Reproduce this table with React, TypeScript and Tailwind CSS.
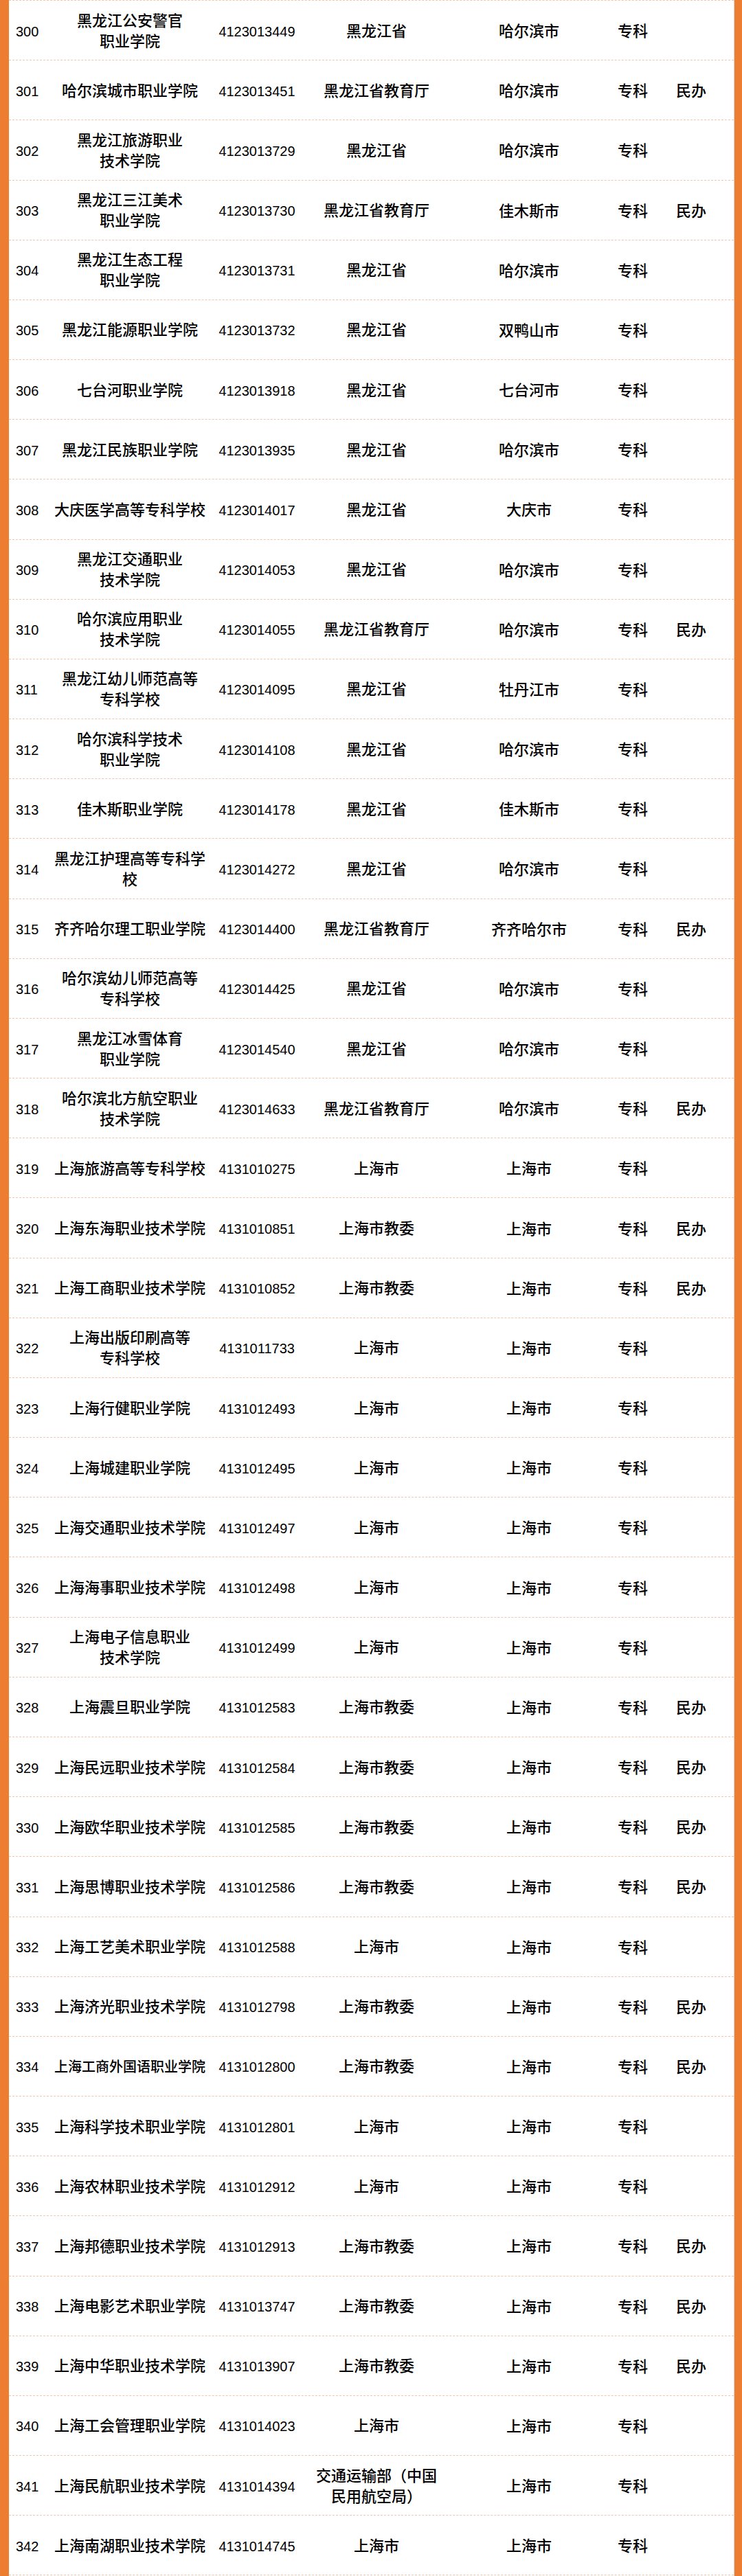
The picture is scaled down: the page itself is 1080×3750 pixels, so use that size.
import React from 'react';

type Row = {
  no: number;
  name: string[];
  code: string;
  dept: string[];
  city: string;
  level: string;
  kind?: string;
  small?: boolean;
};

const rows: Row[] = [
  { no: 300, name: ['黑龙江公安警官', '职业学院'], code: '4123013449', dept: ['黑龙江省'], city: '哈尔滨市', level: '专科' },
  { no: 301, name: ['哈尔滨城市职业学院'], code: '4123013451', dept: ['黑龙江省教育厅'], city: '哈尔滨市', level: '专科', kind: '民办' },
  { no: 302, name: ['黑龙江旅游职业', '技术学院'], code: '4123013729', dept: ['黑龙江省'], city: '哈尔滨市', level: '专科' },
  { no: 303, name: ['黑龙江三江美术', '职业学院'], code: '4123013730', dept: ['黑龙江省教育厅'], city: '佳木斯市', level: '专科', kind: '民办' },
  { no: 304, name: ['黑龙江生态工程', '职业学院'], code: '4123013731', dept: ['黑龙江省'], city: '哈尔滨市', level: '专科' },
  { no: 305, name: ['黑龙江能源职业学院'], code: '4123013732', dept: ['黑龙江省'], city: '双鸭山市', level: '专科' },
  { no: 306, name: ['七台河职业学院'], code: '4123013918', dept: ['黑龙江省'], city: '七台河市', level: '专科' },
  { no: 307, name: ['黑龙江民族职业学院'], code: '4123013935', dept: ['黑龙江省'], city: '哈尔滨市', level: '专科' },
  { no: 308, name: ['大庆医学高等专科学校'], code: '4123014017', dept: ['黑龙江省'], city: '大庆市', level: '专科' },
  { no: 309, name: ['黑龙江交通职业', '技术学院'], code: '4123014053', dept: ['黑龙江省'], city: '哈尔滨市', level: '专科' },
  { no: 310, name: ['哈尔滨应用职业', '技术学院'], code: '4123014055', dept: ['黑龙江省教育厅'], city: '哈尔滨市', level: '专科', kind: '民办' },
  { no: 311, name: ['黑龙江幼儿师范高等', '专科学校'], code: '4123014095', dept: ['黑龙江省'], city: '牡丹江市', level: '专科' },
  { no: 312, name: ['哈尔滨科学技术', '职业学院'], code: '4123014108', dept: ['黑龙江省'], city: '哈尔滨市', level: '专科' },
  { no: 313, name: ['佳木斯职业学院'], code: '4123014178', dept: ['黑龙江省'], city: '佳木斯市', level: '专科' },
  { no: 314, name: ['黑龙江护理高等专科学', '校'], code: '4123014272', dept: ['黑龙江省'], city: '哈尔滨市', level: '专科' },
  { no: 315, name: ['齐齐哈尔理工职业学院'], code: '4123014400', dept: ['黑龙江省教育厅'], city: '齐齐哈尔市', level: '专科', kind: '民办' },
  { no: 316, name: ['哈尔滨幼儿师范高等', '专科学校'], code: '4123014425', dept: ['黑龙江省'], city: '哈尔滨市', level: '专科' },
  { no: 317, name: ['黑龙江冰雪体育', '职业学院'], code: '4123014540', dept: ['黑龙江省'], city: '哈尔滨市', level: '专科' },
  { no: 318, name: ['哈尔滨北方航空职业', '技术学院'], code: '4123014633', dept: ['黑龙江省教育厅'], city: '哈尔滨市', level: '专科', kind: '民办' },
  { no: 319, name: ['上海旅游高等专科学校'], code: '4131010275', dept: ['上海市'], city: '上海市', level: '专科' },
  { no: 320, name: ['上海东海职业技术学院'], code: '4131010851', dept: ['上海市教委'], city: '上海市', level: '专科', kind: '民办' },
  { no: 321, name: ['上海工商职业技术学院'], code: '4131010852', dept: ['上海市教委'], city: '上海市', level: '专科', kind: '民办' },
  { no: 322, name: ['上海出版印刷高等', '专科学校'], code: '4131011733', dept: ['上海市'], city: '上海市', level: '专科' },
  { no: 323, name: ['上海行健职业学院'], code: '4131012493', dept: ['上海市'], city: '上海市', level: '专科' },
  { no: 324, name: ['上海城建职业学院'], code: '4131012495', dept: ['上海市'], city: '上海市', level: '专科' },
  { no: 325, name: ['上海交通职业技术学院'], code: '4131012497', dept: ['上海市'], city: '上海市', level: '专科' },
  { no: 326, name: ['上海海事职业技术学院'], code: '4131012498', dept: ['上海市'], city: '上海市', level: '专科' },
  { no: 327, name: ['上海电子信息职业', '技术学院'], code: '4131012499', dept: ['上海市'], city: '上海市', level: '专科' },
  { no: 328, name: ['上海震旦职业学院'], code: '4131012583', dept: ['上海市教委'], city: '上海市', level: '专科', kind: '民办' },
  { no: 329, name: ['上海民远职业技术学院'], code: '4131012584', dept: ['上海市教委'], city: '上海市', level: '专科', kind: '民办' },
  { no: 330, name: ['上海欧华职业技术学院'], code: '4131012585', dept: ['上海市教委'], city: '上海市', level: '专科', kind: '民办' },
  { no: 331, name: ['上海思博职业技术学院'], code: '4131012586', dept: ['上海市教委'], city: '上海市', level: '专科', kind: '民办' },
  { no: 332, name: ['上海工艺美术职业学院'], code: '4131012588', dept: ['上海市'], city: '上海市', level: '专科' },
  { no: 333, name: ['上海济光职业技术学院'], code: '4131012798', dept: ['上海市教委'], city: '上海市', level: '专科', kind: '民办' },
  { no: 334, name: ['上海工商外国语职业学院'], code: '4131012800', dept: ['上海市教委'], city: '上海市', level: '专科', kind: '民办', small: true },
  { no: 335, name: ['上海科学技术职业学院'], code: '4131012801', dept: ['上海市'], city: '上海市', level: '专科' },
  { no: 336, name: ['上海农林职业技术学院'], code: '4131012912', dept: ['上海市'], city: '上海市', level: '专科' },
  { no: 337, name: ['上海邦德职业技术学院'], code: '4131012913', dept: ['上海市教委'], city: '上海市', level: '专科', kind: '民办' },
  { no: 338, name: ['上海电影艺术职业学院'], code: '4131013747', dept: ['上海市教委'], city: '上海市', level: '专科', kind: '民办' },
  { no: 339, name: ['上海中华职业技术学院'], code: '4131013907', dept: ['上海市教委'], city: '上海市', level: '专科', kind: '民办' },
  { no: 340, name: ['上海工会管理职业学院'], code: '4131014023', dept: ['上海市'], city: '上海市', level: '专科' },
  { no: 341, name: ['上海民航职业技术学院'], code: '4131014394', dept: ['交通运输部（中国', '民用航空局）'], city: '上海市', level: '专科' },
  { no: 342, name: ['上海南湖职业技术学院'], code: '4131014745', dept: ['上海市'], city: '上海市', level: '专科' },
];

const font = "font-['Liberation_Sans','Noto_Sans_CJK_SC',sans-serif]";

function Lines({ lines }: { lines: string[] }) {
  return (
    <div className="flex flex-col items-center text-center leading-[30px]">
      {lines.map((l) => (
        <span key={l} className="whitespace-nowrap">{l}</span>
      ))}
    </div>
  );
}

function TableRow({ row }: { row: Row }) {
  return (
    <div className="grid h-[87.18px] grid-cols-[65px_222px_148px_200px_244px_58px_112px] items-center border-b border-dashed border-[#f2c7aa] pt-[3px] text-black">
      <div className="pl-[10px] text-[20px]">{row.no}</div>
      <div className={`flex justify-center font-medium ${row.small ? 'text-[20px]' : 'text-[22px]'}`}>
        <Lines lines={row.name} />
      </div>
      <div className="text-center text-[20px]">{row.code}</div>
      <div className="flex justify-center text-[22px] font-medium">
        <Lines lines={row.dept} />
      </div>
      <div className="text-center text-[22px] font-medium">{row.city}</div>
      <div className="text-center text-[22px] font-medium">{row.level}</div>
      <div className="text-center text-[22px] font-medium">{row.kind ?? ''}</div>
    </div>
  );
}

export default function App() {
  return (
    <div className={`flex h-[3750px] w-[1080px] bg-white ${font}`}>
      <div className="w-[13px] shrink-0 bg-[#ed7d31]" />
      <div className="flex-1 overflow-hidden border-t border-dashed border-[#f2c7aa]">
        {rows.map((r) => (
          <TableRow key={r.no} row={r} />
        ))}
      </div>
      <div className="w-[12px] shrink-0 border-l border-[#d8d8d8] bg-[#ed7d31]" />
    </div>
  );
}
